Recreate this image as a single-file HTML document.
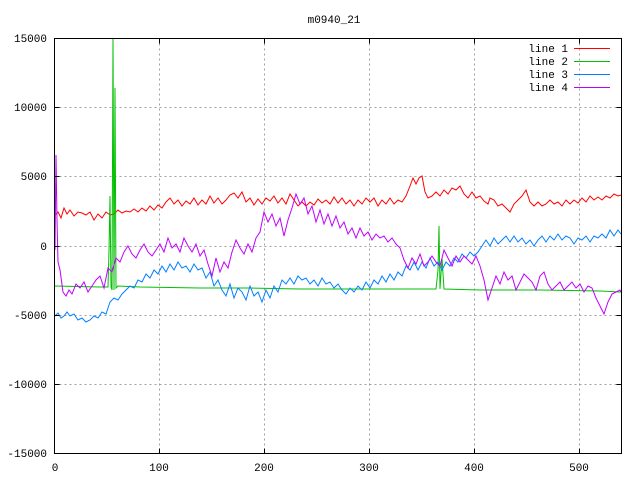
<!DOCTYPE html>
<html><head><meta charset="utf-8"><style>
html,body{margin:0;padding:0;background:#fff;}
svg{display:block;font-family:"Liberation Mono","DejaVu Sans Mono",monospace;font-size:11px;}
</style></head><body>
<svg width="640" height="480" viewBox="0 0 640 480" xmlns="http://www.w3.org/2000/svg">
<rect width="640" height="480" fill="#fff"/>
<text x="334" y="23" text-anchor="middle">m0940_21</text>
<g stroke="#a0a0a0" stroke-width="1" stroke-dasharray="2,3" fill="none">
<path d="M54.5 107.5H621.5M54.5 176.5H621.5M54.5 246.5H621.5M54.5 315.5H621.5M54.5 384.5H621.5"/>
<path d="M159.5 38.5V453.5M264.5 38.5V453.5M369.5 38.5V453.5M474.5 38.5V453.5M579.5 38.5V453.5"/>
</g>
<g text-anchor="end">
<text x="47" y="42">15000</text><text x="47" y="111">10000</text><text x="47" y="180">5000</text>
<text x="47" y="250">0</text><text x="47" y="319">-5000</text><text x="47" y="388">-10000</text><text x="47" y="457">-15000</text>
</g>
<g text-anchor="middle">
<text x="55" y="471">0</text><text x="159" y="471">100</text><text x="264" y="471">200</text>
<text x="369" y="471">300</text><text x="474" y="471">400</text><text x="579" y="471">500</text>
</g>
<g fill="none" stroke-width="1">
<polyline stroke="#ff0000" points="55,215 58,212 61,218 64,208 67,214 70,210 74,216 78,212 82,213 86,215 90,212 94,220 98,214 102,218 106,212 110,215 114,214 118,210 122,213 126,211 130,212 134,209 138,212 142,208 146,211 150,206 154,210 158,205 162,208 166,202 170,198 174,204 178,200 182,206 186,201 190,204 194,198 198,205 202,200 206,204 210,196 214,203 218,198 222,204 226,200 230,195 234,193 238,198 242,192 246,202 250,198 254,205 258,199 262,204 266,198 270,201 274,196 278,203 282,198 286,204 290,194 294,200 298,206 302,202 306,206 310,202 314,205 318,199 322,203 326,200 330,204 334,197 338,203 342,198 346,204 350,200 354,206 358,200 362,204 366,198 370,202 374,198 378,206 382,200 386,204 390,198 394,204 398,200 402,202 406,196 410,186 413,178 416,184 419,178 422,176 425,192 428,198 432,196 436,192 440,196 444,190 448,194 452,188 456,190 460,186 464,194 468,198 472,192 476,198 480,196 484,201 488,204 490,198 494,200 498,206 502,204 506,208 510,212 514,204 518,200 522,196 526,190 530,202 534,206 538,202 542,206 546,204 550,200 554,204 558,202 562,206 566,200 570,204 574,200 578,203 582,198 586,202 590,196 594,200 598,197 602,200 606,196 610,198 614,194 618,196 621,195"/>
<polyline stroke="#00c000" points="55,286 100,287 108,287 109,250 110,196 111,287 112,290 113,38 114,290 115,88 116,288 118,286 140,287 200,288 250,288 300,289 360,289 400,289 436,289 438,270 439,226 440,289 442,258 444,289 480,290 540,290 600,291 621,292"/>
<polyline stroke="#0080ff" points="55,316 58,313 61,318 64,316 67,312 70,316 74,314 78,320 82,318 86,322 90,320 94,316 98,318 102,312 106,314 110,302 114,298 118,300 122,294 126,290 130,286 134,288 138,280 142,282 146,274 150,278 154,270 158,274 162,266 166,272 170,264 174,270 178,262 182,268 186,266 190,272 194,264 198,270 202,268 206,278 210,272 214,286 218,280 222,290 226,296 230,284 234,298 238,288 242,292 246,300 250,286 254,296 258,292 262,302 266,290 270,298 274,286 278,292 282,280 286,284 290,278 294,284 298,276 302,280 306,278 310,284 314,280 318,286 322,278 326,284 330,282 334,288 338,284 342,290 346,294 350,288 354,292 358,286 362,290 366,282 370,288 374,280 378,284 382,276 386,282 390,274 394,280 398,272 402,276 406,266 410,270 414,262 418,270 422,262 426,268 430,258 434,266 438,262 442,270 446,262 450,266 454,258 458,262 462,254 466,258 470,252 474,256 478,252 482,246 486,240 490,246 494,238 498,244 502,240 506,236 510,242 514,236 518,242 522,238 526,244 530,240 534,246 538,240 542,236 546,242 550,236 554,240 558,234 562,240 566,236 570,238 574,244 578,238 582,240 586,236 590,242 594,236 598,238 602,234 606,238 610,230 614,236 618,230 621,234"/>
<polyline stroke="#c000ff" points="55,250 56,155 57,220 58,262 60,270 63,292 66,296 69,290 72,294 76,284 80,288 84,282 88,292 92,286 96,280 100,276 104,288 108,268 112,272 116,258 120,262 124,252 128,246 132,254 136,258 140,250 144,244 148,252 152,256 156,250 160,244 164,252 168,238 172,248 176,244 180,252 184,238 188,246 192,252 196,244 200,256 204,250 208,264 212,276 216,258 220,272 224,262 228,268 232,252 236,240 240,248 244,254 248,244 252,252 256,238 260,232 264,212 268,222 272,214 276,226 280,218 284,236 288,220 292,208 296,194 300,204 304,198 308,214 312,206 316,222 320,210 324,224 328,214 332,226 336,216 340,228 344,222 348,234 352,228 356,238 360,228 364,236 368,232 372,240 376,234 380,238 384,236 388,242 392,238 396,244 400,248 404,260 408,268 412,258 416,264 420,254 424,266 428,262 432,256 436,262 440,266 444,250 448,258 452,266 456,256 460,262 464,256 468,260 472,264 476,256 480,266 484,280 488,300 492,288 496,276 500,284 504,272 508,280 512,276 516,290 520,282 524,274 528,278 532,282 536,290 540,276 544,272 548,284 552,290 556,286 560,282 564,290 568,286 572,282 576,288 580,284 584,292 588,286 592,288 596,298 600,306 604,314 608,302 612,294 616,292 620,290 621,292"/>
</g>
<g font-size="11">
<text x="568" y="52" text-anchor="end">line 1</text><line x1="574" y1="48.5" x2="610" y2="48.5" stroke="#ff0000"/>
<text x="568" y="65" text-anchor="end">line 2</text><line x1="574" y1="61.5" x2="610" y2="61.5" stroke="#00c000"/>
<text x="568" y="78" text-anchor="end">line 3</text><line x1="574" y1="74.5" x2="610" y2="74.5" stroke="#0080ff"/>
<text x="568" y="91" text-anchor="end">line 4</text><line x1="574" y1="87.5" x2="610" y2="87.5" stroke="#c000ff"/>
</g>
<g stroke="#000" stroke-width="1" fill="none">
<rect x="54.5" y="38.5" width="567" height="415"/>
<path d="M54.5 107.5h5M54.5 176.5h5M54.5 246.5h5M54.5 315.5h5M54.5 384.5h5M621.5 107.5h-5M621.5 176.5h-5M621.5 246.5h-5M621.5 315.5h-5M621.5 384.5h-5"/>
<path d="M159.5 453.5v-5M264.5 453.5v-5M369.5 453.5v-5M474.5 453.5v-5M579.5 453.5v-5M159.5 38.5v5M264.5 38.5v5M369.5 38.5v5M474.5 38.5v5M579.5 38.5v5"/>
</g>
</svg>
</body></html>
